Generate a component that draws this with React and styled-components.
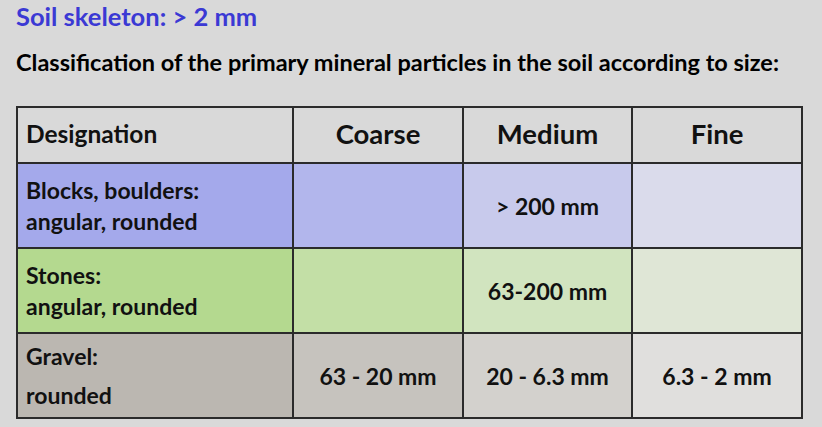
import React from "react";
import styled, { createGlobalStyle } from "styled-components";

const GlobalStyle = createGlobalStyle`
  html, body {
    margin: 0;
    padding: 0;
    background: #d9d9d9;
  }
  body {
    font-family: Lato, "Open Sans", "Liberation Sans", sans-serif;
    font-weight: 700;
    color: #111;
  }
`;

const rows = [
  {
    name: ["Blocks, boulders:", "angular, rounded"],
    cells: ["", "> 200 mm", ""],
    colors: ["#a4a9eb", "#b2b6ec", "#c8caec", "#dadbeb"],
    lh: 31,
  },
  {
    name: ["Stones:", "angular, rounded"],
    cells: ["", "63-200 mm", ""],
    colors: ["#b4d98f", "#c3dfa6", "#d1e4bf", "#dfe6d6"],
    lh: 31,
  },
  {
    name: ["Gravel:", "rounded"],
    cells: ["63 - 20 mm", "20 - 6.3 mm", "6.3 - 2 mm"],
    colors: ["#bbb7b1", "#c6c3be", "#d3d1cd", "#e0dfdd"],
    lh: 39,
  },
];

const Page = styled.div`
  width: 822px;
  height: 427px;
  box-sizing: border-box;
  padding: 0 0 0 16px;
  overflow: hidden;
`;

const Title = styled.h1`
  margin: 0;
  font-size: 25.5px;
  line-height: 32px;
  font-weight: 700;
  color: #3b39d4;
`;

const Subtitle = styled.h2`
  margin: 15px 0 0;
  font-size: 23.5px;
  line-height: 30px;
  font-weight: 700;
  color: #000;
  white-space: nowrap;
`;

const Table = styled.table`
  margin-top: 29px;
  border-collapse: collapse;
  table-layout: fixed;
  width: 786px;
  border: 2px solid #222;
`;

const HeadCell = styled.th`
  height: 51px;
  padding: 0 8px 3px;
  border: 2px solid #2b2b2b;
  background: #d9d9d9;
  font-size: ${(p) => (p.$left ? 24.5 : 27.5)}px;
  font-weight: 700;
  text-align: ${(p) => (p.$left ? "left" : "center")};
  vertical-align: middle;
`;

const NameCell = styled.td`
  height: 83px;
  padding: 0 8px;
  border: 2px solid #2b2b2b;
  background: ${(p) => p.$bg};
  font-size: 23px;
  line-height: ${(p) => p.$lh}px;
  vertical-align: middle;
`;

const DataCell = styled.td`
  border: 2px solid #2b2b2b;
  background: ${(p) => p.$bg};
  font-size: 23px;
  text-align: center;
  vertical-align: middle;
`;

const Line = styled.div`
  white-space: nowrap;
`;

export default function App() {
  return (
    <>
      <GlobalStyle />
      <Page>
        <Title>Soil skeleton: &gt; 2 mm</Title>
        <Subtitle>
          Classification of the primary mineral particles in the soil according
          to size:
        </Subtitle>
        <Table>
          <colgroup>
            <col style={{ width: 276 }} />
            <col style={{ width: 170 }} />
            <col style={{ width: 169 }} />
            <col style={{ width: 170 }} />
          </colgroup>
          <thead>
            <tr>
              <HeadCell $left>Designation</HeadCell>
              <HeadCell>Coarse</HeadCell>
              <HeadCell>Medium</HeadCell>
              <HeadCell>Fine</HeadCell>
            </tr>
          </thead>
          <tbody>
            {rows.map((r) => (
              <tr key={r.name[0]}>
                <NameCell $bg={r.colors[0]} $lh={r.lh}>
                  {r.name.map((l) => (
                    <Line key={l}>{l}</Line>
                  ))}
                </NameCell>
                {r.cells.map((c, i) => (
                  <DataCell key={i} $bg={r.colors[i + 1]}>
                    {c}
                  </DataCell>
                ))}
              </tr>
            ))}
          </tbody>
        </Table>
      </Page>
    </>
  );
}
